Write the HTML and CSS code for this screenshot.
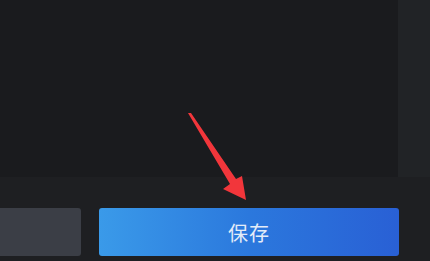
FILE: index.html
```html
<!DOCTYPE html>
<html lang="zh-CN">
<head>
    <meta charset="UTF-8">
    <meta name="viewport" content="width=device-width, initial-scale=1.0">
    <title>保存</title>
    <link rel="stylesheet" href="styles.css">
</head>
<body>
    <div class="editor">
        <div class="top_row">
            <div class="panel"></div>
            <div class="side_strip"></div>
        </div>
        <div class="footer">
            <button class="btn btn_cancel"></button>
            <button class="btn btn_save">保存</button>
        </div>

        <!-- annotation arrow pointing at the save button -->
        <svg class="arrow" width="430" height="261" viewBox="0 0 430 261">
            <polygon points="188,113 191,113 236,179 242,176 246,200 223,189 230,184" fill="#f2363b"/>
        </svg>
    </div>
</body>
</html>
```

FILE: styles.css
```css
body {
    margin: 0;
    font-family: "Noto Sans CJK SC", "Noto Sans", sans-serif;
    background-color: #1e1f22;
}

.editor {
    position: relative;
    width: 430px;
    height: 261px;
    overflow: hidden;
}

.top_row {
    display: flex;
    height: 177px;
}

.panel {
    flex: 1;
    background: #1a1b1e;
}

.side_strip {
    width: 32px;
    background: #212326;
}

.footer {
    display: flex;
    gap: 18px;
    padding-top: 31px;
}

.btn {
    height: 48px;
    border: none;
    border-radius: 3px;
    padding: 0;
    font-family: inherit;
}

.btn_cancel {
    width: 81px;
    background: #3b3e46;
    border-radius: 0 3px 3px 0;
}

.btn_save {
    width: 300px;
    background: linear-gradient(90deg, #3a9ae9, #2b78dd 50%, #2960d5);
    color: #e4ecf8;
    font-size: 20px;
    letter-spacing: 1px;
}

.arrow {
    position: absolute;
    left: 0;
    top: 0;
    pointer-events: none;
}
```
